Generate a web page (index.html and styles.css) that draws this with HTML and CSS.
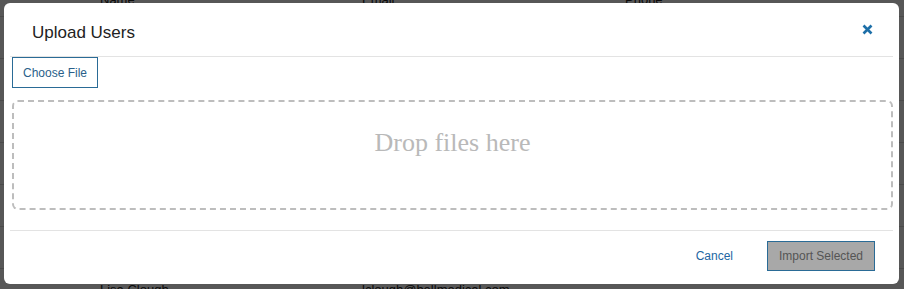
FILE: index.html
```html
<!DOCTYPE html>
<html lang="en">
<head>
  <meta charset="UTF-8">
  <meta name="viewport" content="width=device-width, initial-scale=1.0">
  <title>Upload Users</title>
  <link rel="stylesheet" href="styles.css">
</head>
<body>
  <div class="page">
    <div class="table-row head">
      <span>Name</span>
      <span>Email</span>
      <span>Phone</span>
    </div>
    <div class="table-row"></div>
    <div class="table-row"></div>
    <div class="table-row"></div>
    <div class="table-row"></div>
    <div class="table-row"></div>
    <div class="table-row"></div>
    <div class="table-row last">
      <span>Lisa Clough</span>
      <span>lclough@bellmedical.com</span>
      <span></span>
    </div>
  </div>
  <div class="backdrop"></div>

  <div class="modal">
    <div class="modal-header">
      <h4 class="modal-title">Upload Users</h4>
      <button class="close-button" aria-label="Close">
        <svg width="11" height="11" viewBox="0 0 11 11">
          <path d="M1.5 1.5 L9.5 9.5 M9.5 1.5 L1.5 9.5" stroke="#1d6fa8" stroke-width="2.6" stroke-linecap="butt"/>
        </svg>
      </button>
    </div>
    <div class="modal-body">
      <button class="choose-button">Choose File</button>
      <div class="drop-zone">Drop files here</div>
    </div>
    <div class="modal-footer">
      <button class="link-button">Cancel</button>
      <button class="import-button" disabled>Import Selected</button>
    </div>
  </div>
</body>
</html>
```

FILE: styles.css
```css
html {
  overflow: hidden;
}

body {
  margin: 0;
  font-family: "Liberation Sans", Arial, sans-serif;
  background-color: #fff;
  height: 289px;
  overflow: hidden;
}

.page {
  margin-top: -8px;
  height: 297px;
  overflow: hidden;
}

.table-row {
  display: grid;
  grid-template-columns: 262px 263px 1fr;
  padding-left: 100px;
  height: 41px;
  border-bottom: 1px solid #d8d8d8;
  font-size: 13px;
  color: #222;
  align-items: center;
}

.table-row.head {
  height: 24px;
  align-items: start;
}

.backdrop {
  position: fixed;
  inset: 0;
  background-color: rgba(0, 0, 0, 0.66);
}

.modal {
  position: fixed;
  left: 4px;
  top: 3px;
  width: 895px;
  height: 281px;
  background-color: #fff;
  border-radius: 6px;
  display: flex;
  flex-direction: column;
  padding: 0 6px;
  box-sizing: border-box;
}

.modal-header {
  display: flex;
  align-items: center;
  justify-content: space-between;
  height: 53px;
  border-bottom: 1px solid #e3e3e3;
  padding: 0 20px 0 22px;
}

.modal-title {
  margin: 7px 0 0 0;
  font-size: 17px;
  font-weight: normal;
  color: #222;
}

.close-button {
  background: none;
  border: none;
  padding: 0;
  cursor: pointer;
  display: flex;
}

.modal-body {
  padding: 0 0 0 2px;
  height: 173px;
  border-bottom: 1px solid #e3e3e3;
}

.choose-button {
  display: block;
  height: 31px;
  padding: 0 10px;
  background-color: #fff;
  border: 1px solid #2a6b96;
  font-family: "Liberation Sans", Arial, sans-serif;
  font-size: 12px;
  color: #2a5f8a;
  cursor: pointer;
}

.drop-zone {
  margin-top: 12px;
  height: 110px;
  box-sizing: border-box;
  border: 2px dashed #bdbdbd;
  border-radius: 6px;
  display: flex;
  align-items: center;
  justify-content: center;
  padding-bottom: 25px;
  font-family: "Liberation Serif", "Times New Roman", serif;
  font-size: 26px;
  color: #b9b9b9;
}

.modal-footer {
  display: flex;
  justify-content: flex-end;
  align-items: center;
  gap: 34px;
  padding: 10px 18px 0 0;
}

.link-button {
  background: none;
  border: none;
  font-family: "Liberation Sans", Arial, sans-serif;
  font-size: 12px;
  color: #2266a2;
  padding: 0;
  cursor: pointer;
}

.import-button {
  height: 30px;
  width: 108px;
  background-color: #a8a8a8;
  border: 1px solid #2a6b96;
  font-family: "Liberation Sans", Arial, sans-serif;
  font-size: 12px;
  color: #555;
  padding: 0;
}
```
